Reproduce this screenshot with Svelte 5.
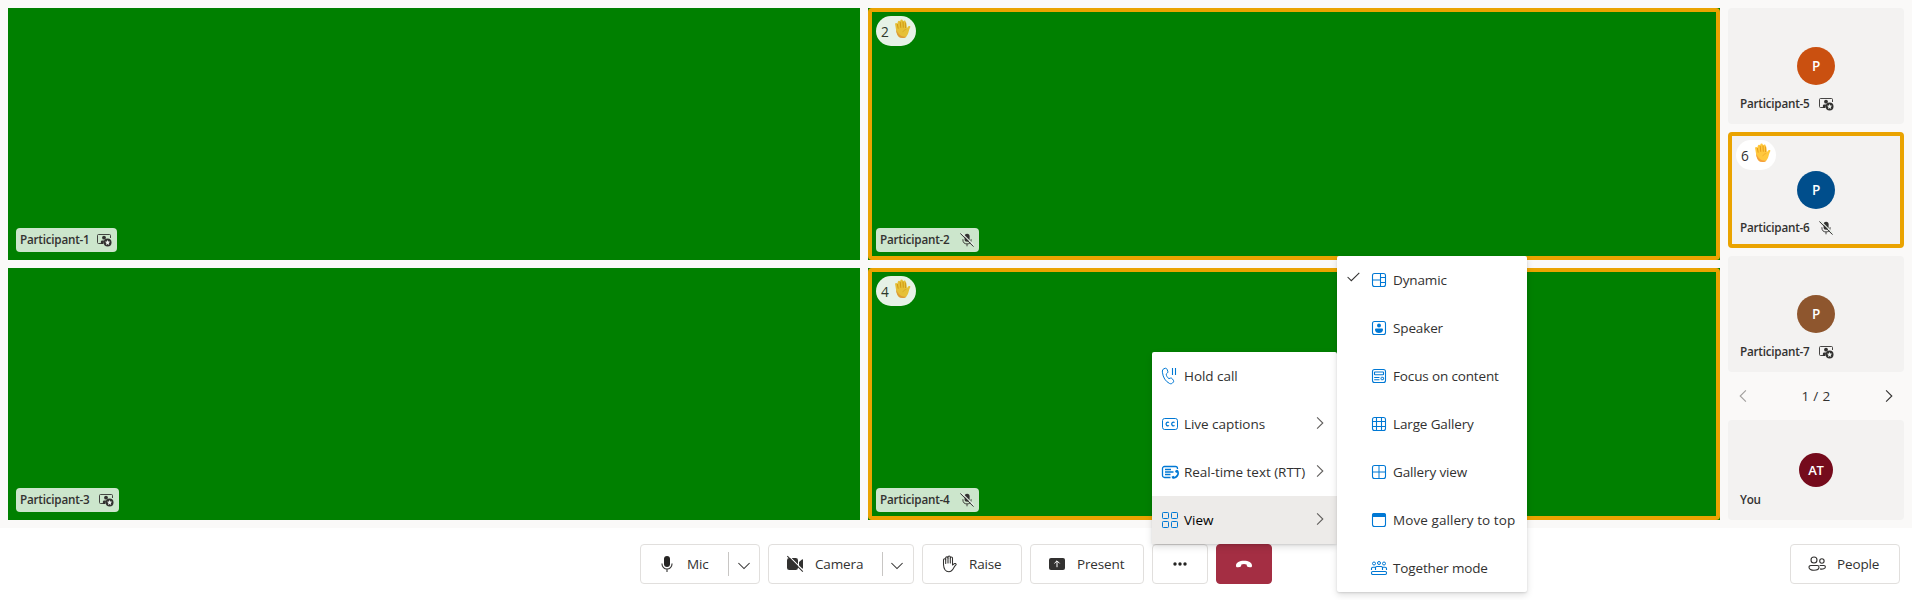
<script>
  const mainTiles = [
    { name: 'Participant-1', state: 'spotlight', w: 101 },
    { name: 'Participant-2', state: 'muted', hand: 2, w: 103 },
    { name: 'Participant-3', state: 'spotlight', w: 103 },
    { name: 'Participant-4', state: 'muted', hand: 4, w: 103 }
  ];
  const sideTiles = [
    { name: 'Participant-5', initials: 'P', state: 'spotlight', color: '#ca5010' },
    { name: 'Participant-6', initials: 'P', state: 'muted', hand: 6, color: '#004e8c' },
    { name: 'Participant-7', initials: 'P', state: 'spotlight', color: '#8e562e' }
  ];
  const moreMenu = [
    { icon: 'hold', label: 'Hold call' },
    { icon: 'cc', label: 'Live captions', sub: true },
    { icon: 'rtt', label: 'Real-time text (RTT)', sub: true },
    { icon: 'view', label: 'View', sub: true, active: true }
  ];
  const viewMenu = [
    { icon: 'dynamic', label: 'Dynamic', checked: true },
    { icon: 'speaker', label: 'Speaker' },
    { icon: 'focus', label: 'Focus on content' },
    { icon: 'large', label: 'Large Gallery' },
    { icon: 'gallery', label: 'Gallery view' },
    { icon: 'top', label: 'Move gallery to top', wide: true },
    { icon: 'together', label: 'Together mode' }
  ];
</script>

{#snippet stateIcon(state)}
  {#if state === 'muted'}
    <svg class="state" width="14" height="14" viewBox="0 0 14 14" fill="none" stroke="#323130">
      <rect x="4.6" y=".8" width="5" height="8" rx="2.5" fill="#323130" stroke="none" />
      <path d="M2.9 6.2v.6a4.1 4.1 0 0 0 8.2 0v-.6M7 11v2.3" stroke-width=".9" />
      <path d="M1.100 -.5l13.2 13.2" stroke="#e4ece4" stroke-width="1.1" />
      <path d="M0.3 .4l13.2 13.2" stroke-width="1" />
    </svg>
  {:else}
    <svg class="state" width="15" height="14" viewBox="0 0 15 14" fill="none" stroke="#323130">
      <path d="M4.500 10.500H1.500a1 1 0 0 1-1-1v-7a1 1 0 0 1 1-1h11a1 1 0 0 1 1 1V5" stroke-width=".9" />
      <circle cx="7" cy="4.700" r="1.900" fill="#323130" stroke="none" />
      <path d="M3.900 10.900V8.700a1.200 1.200 0 0 1 1.200-1.200h2L6.400 10.900z" fill="#323130" stroke="none" />
      <circle cx="10.600" cy="9.500" r="3.900" fill="#323130" stroke="none" />
      <path d="M10.600 6.900l.75 1.700 1.850.2-1.400 1.250.4 1.850-1.600-.95-1.600.95.4-1.850L8 8.800l1.850-.2z" fill="#eef2ee" stroke="none" />
    </svg>
  {/if}
{/snippet}

{#snippet handBadge(order, dim)}
  <div class="badge" class:dim>
    <span>{order}</span>
    <svg width="17" height="20" viewBox="0 0 17 20">
      <path d="M2 10.500L1.100 5.300a1.100 1.100 0 0 1 2.150-.5L3.800 3a1.200 1.200 0 0 1 2.350-.4l.2-1a1.200 1.200 0 0 1 2.400 0l.6.9a1.150 1.150 0 0 1 2.300.2l.7 2.300.6 4.200 1.100-1.700c.8-1.100 2.700-.6 2.300.5-.7 1.200-1 2.200-1.400 3.600C14 16 12.500 19 8.600 19 4.500 19 2.600 15.500 2 10.500z" fill="#ffc83d" />
      <path d="M3.300 5l.9 4.600M6.200 2.800l.6 6M9 2.500l.3 6.200M11.700 3.500l-.1 5.500" stroke="#d67d00" stroke-width=".6" fill="none" />
      <path d="M2 10.500C2.600 15.500 4.500 19 8.600 19c1.800 0 3.100-.6 4-1.600-4.400 1.100-7.900-1.100-10.600-6.900z" fill="#f59f3d" />
      <path d="M8.800 13.200c.6-1.700 1.700-2.600 3.500-2.700" stroke="#e79b1f" stroke-width=".5" fill="none" />
    </svg>
  </div>
{/snippet}

{#snippet chevron(dir)}
  {#if dir === 'down'}
    <svg width="12" height="8" viewBox="0 0 12 8" fill="none" stroke="currentColor" stroke-width="1.050"><path d="M.4 1l5.600 5.600L11.600 1" /></svg>
  {:else if dir === 'left'}
    <svg width="8" height="12" viewBox="0 0 8 12" fill="none" stroke="currentColor" stroke-width="1.100"><path d="M6.900.4L1.200 6l5.700 5.600" /></svg>
  {:else}
    <svg width="8" height="12" viewBox="0 0 8 12" fill="none" stroke="currentColor" stroke-width="1.100"><path d="M1.100.4L6.800 6l-5.700 5.600" /></svg>
  {/if}
{/snippet}

{#snippet menuIcon(name)}
  <svg class="mi" width="18" height="18" viewBox="0 0 18 18" fill="none" stroke="#0078d4" stroke-width="1">
    {#if name === 'hold'}
      <path d="M3 1.700l1.200-.4c.8-.2 1.500.2 1.800.9l.8 2c.3.7.1 1.300-.4 1.800L5.200 7.100c.1 1.700 1.100 3.400 2.700 4.500l1.500-.5c.7-.2 1.400 0 1.800.6l1.200 1.600c.4.600.4 1.400-.1 1.900l-.8.8c-.8.800-1.900 1-2.900.5C4.500 14.400 2 10.600 1.400 5.200 1.200 3.500 1.700 2.200 3 1.700z" />
      <path d="M11.500 1v7M14.500 1v7" stroke-width="1.100" />
    {:else if name === 'cc'}
      <rect x="1.500" y="3.500" width="15" height="11" rx="2.200" />
      <path d="M8 7.400a1.900 1.900 0 1 0 0 3.200M13.600 7.400a1.900 1.900 0 1 0 0 3.200" stroke-width="1.200" />
    {:else if name === 'rtt'}
      <path d="M9.500 14.500h-6a2 2 0 0 1-2-2v-7a2 2 0 0 1 2-2h11a2 2 0 0 1 2 2V6" stroke-width="1.300" />
      <path d="M4 6.500h6M4 9h8.500M4 11.500h5.500" stroke-width="1.300" />
      <path d="M16 7.400c2.200 2.600 1.100 7-4 7.600" stroke-width="1.700" />
      <path d="M14.500 8.900l2-1.200M11.500 13.200l1 1.900" stroke-width="2.300" />
    {:else if name === 'view'}
      <rect x="1.500" y="1.500" width="6" height="6" rx=".8" />
      <rect x="10.500" y="1.500" width="6" height="6" rx=".8" />
      <rect x="1.500" y="10.500" width="6" height="6" rx=".8" />
      <rect x="10.500" y="10.500" width="6" height="6" rx=".8" />
    {:else if name === 'together'}
      <rect x="1.500" y="12.500" width="15" height="3" rx="1.200" stroke-width="1.100" />
      <circle cx="4" cy="4.500" r="1.500" /><circle cx="9" cy="4" r="1.500" /><circle cx="14" cy="4.500" r="1.500" />
      <path d="M1.500 11V9.600a1.400 1.400 0 0 1 1.400-1.400h2.300M16.500 11V9.600a1.400 1.400 0 0 0-1.400-1.400h-2.300M5.500 11V8.700a1.300 1.300 0 0 1 1.300-1.200h4.400a1.300 1.300 0 0 1 1.300 1.200V11" stroke-width="1.100" />
    {:else}
      <rect x="2.500" y="2.500" width="13" height="13" rx="2" stroke-width="1.100" />
      {#if name === 'dynamic'}
        <path d="M10.500 2.500v13M2.500 9h8M10.500 6.500h5M10.500 11.500h5" stroke-width="1.100" />
      {:else if name === 'speaker'}
        <circle cx="9" cy="6.400" r="2" fill="#0078d4" stroke="none" />
        <path d="M5 10.700c0-.8.5-1.200 1.200-1.200h5.600c.7 0 1.200.4 1.200 1.200 0 2-1.800 3.300-4 3.300s-4-1.300-4-3.300z" fill="#0078d4" stroke="none" />
      {:else if name === 'focus'}
        <rect x="4.500" y="5" width="9" height="2.800" rx=".5" stroke-width="1.100" />
        <path d="M4.200 10.500h5.300M4.200 12.800h5.300" stroke-width="1.100" />
        <rect x="11" y="10.300" width="2.600" height="2.400" rx=".5" />
      {:else if name === 'large'}
        <path d="M6.500 2.500v13M11.500 2.500v13M2.500 6.500h13M2.500 11.500h13" stroke-width="1.100" />
      {:else if name === 'gallery'}
        <path d="M9 2.500v13M2.500 9h13" />
      {:else if name === 'top'}
        <path d="M2 6V4.200a2.200 2.200 0 0 1 2.200-2.200h9.600a2.200 2.200 0 0 1 2.200 2.200V6z" fill="#0078d4" stroke="none" />
      {/if}
    {/if}
  </svg>
{/snippet}

<div class="call">
  <section class="stage">
    <div class="grid">
      {#each mainTiles as t}
        <article class="tile" class:raised={t.hand}>
          {#if t.hand}{@render handBadge(t.hand, true)}{/if}
          <div class="tag" style="width:{t.w}px"><span>{t.name}</span>{@render stateIcon(t.state)}</div>
        </article>
      {/each}
    </div>
    <aside>
      {#each sideTiles as t}
        <article class="person" class:raised={t.hand}>
          <div class="avatar" style="background:{t.color}">{t.initials}</div>
          <div class="who"><span>{t.name}</span>{@render stateIcon(t.state)}</div>
          {#if t.hand}{@render handBadge(t.hand, false)}{/if}
        </article>
      {/each}
      <nav class="pager">
        <span class="off">{@render chevron('left')}</span>
        <span class="count">1 / 2</span>
        <span>{@render chevron('right')}</span>
      </nav>
      <article class="person self">
        <div class="avatar">AT</div>
        <div class="who"><span>You</span></div>
      </article>
    </aside>
  </section>

  <footer>
    <div class="controls">
      <div class="btn mic">
        <svg width="20" height="20" viewBox="0 0 20 20" fill="none" stroke="#323130">
          <rect x="7" y="2" width="6" height="11" rx="3" fill="#252423" stroke="none" />
          <path d="M5 9.500v.5a5 5 0 0 0 10 0v-.5M10 15v3" stroke-width="1.100" />
        </svg>
        <span class="label">Mic</span><i></i><span class="arrow">{@render chevron('down')}</span>
      </div>
      <div class="btn camera">
        <svg width="20" height="20" viewBox="0 0 20 20">
          <rect x="2" y="4" width="11" height="12" rx="2.300" fill="#323130" />
          <path d="M14 8l3-2.500c.5-.4 1-.2 1 .4v8.200c0 .6-.5.8-1 .4L14 12z" fill="#323130" />
          <path d="M3.200 1.300l15.500 15.500" stroke="#fff" stroke-width="1.200" />
          <path d="M2.300 2.200l15.500 15.500" stroke="#323130" stroke-width="1.100" />
        </svg>
        <span class="label">Camera</span><i></i><span class="arrow">{@render chevron('down')}</span>
      </div>
      <div class="btn raise">
        <svg width="20" height="20" viewBox="0 0 20 20" fill="none" stroke="#323130" stroke-width="1.050" stroke-linejoin="round" stroke-linecap="round">
          <path d="M4.500 10.500V5.800a1.100 1.100 0 0 1 2.200 0V4a1.150 1.150 0 0 1 2.300 0V3.200a1.150 1.150 0 0 1 2.300 0V4a1.100 1.100 0 0 1 2.200 0v7l1.500-1.200c.9-.6 2-.2 2.200.8-1.800 1.300-2.600 3.800-3.800 5.300-.9 1.200-1.900 1.800-3.400 1.800-3.300 0-5.300-2.700-5.500-7.200z" />
          <path d="M6.700 5.800v3.700M9 4v5M11.300 4v5" />
        </svg>
        <span class="label">Raise</span>
      </div>
      <div class="btn present">
        <svg width="20" height="20" viewBox="0 0 20 20">
          <rect x="2" y="4" width="16" height="12" rx="2" fill="#323130" />
          <path d="M10 13.200V7M7.400 9.400L10 6.800l2.600 2.600" stroke="#fff" fill="none" stroke-width="1" />
        </svg>
        <span class="label">Present</span>
      </div>
      <div class="btn more">
        <svg width="16" height="6" viewBox="0 0 16 6" fill="#252423"><circle cx="3" cy="3" r="1.700" /><circle cx="8" cy="3" r="1.700" /><circle cx="13" cy="3" r="1.700" /></svg>
      </div>
      <div class="btn end">
        <svg width="18" height="8" viewBox="0 0 18 8" fill="#fff"><path d="M9 .8c4.500 0 8 2 8 4.600 0 1.600-.7 2.100-2 1.900l-1.800-.3c-.9-.2-1.300-.6-1.400-1.400l-.2-1.100a8 8 0 0 0-5.200 0l-.2 1.100c-.1.800-.5 1.200-1.400 1.400L3 7.300c-1.300.2-2-.3-2-1.900C1 2.800 4.500.8 9 .8z" /></svg>
      </div>
    </div>
    <div class="btn people">
      <svg width="20" height="20" viewBox="0 0 20 20" fill="none" stroke="#323130" stroke-width="1.100">
        <circle cx="7" cy="6" r="3" /><circle cx="14.900" cy="7" r="2.200" />
        <path d="M3.700 11.500h6.600a1.700 1.700 0 0 1 1.700 1.700c0 1.900-2.200 3-5 3s-5-1.100-5-3a1.700 1.700 0 0 1 1.700-1.700zM12.600 11.500h4.300a1.500 1.500 0 0 1 1.500 1.500c0 1.600-2.700 2.500-5.300 1.900" />
      </svg>
      <span class="label">People</span>
    </div>
  </footer>

  <ul class="menu more-menu">
    {#each moreMenu as m}
      <li class:active={m.active}>
        {@render menuIcon(m.icon)}<span>{m.label}</span>
        {#if m.sub}<b>{@render chevron('right')}</b>{/if}
      </li>
    {/each}
  </ul>
  <ul class="menu view-menu">
    {#each viewMenu as m}
      <li class:wide={m.wide}>
        <em>
          {#if m.checked}<svg width="13" height="10" viewBox="0 0 13 10" fill="none" stroke="#323130" stroke-width="1.050"><path d="M.6 5l3.700 3.700L12.300.8" /></svg>{/if}
        </em>
        {@render menuIcon(m.icon)}<span>{m.label}</span>
      </li>
    {/each}
  </ul>
</div>

<style>
  :global(body) { margin: 0; background: #fff; }
  .call { position: relative; width: 1912px; height: 600px; overflow: hidden; background: #fff; color: #323130; font: 400 13.500px/20px "Open Sans", "Noto Sans", sans-serif; letter-spacing: -.14px; }
  .call :global(*) { box-sizing: border-box; }
  svg { display: block; flex: none; }
  .stage { display: flex; gap: 8px; height: 528px; padding: 8px; background: #faf9f8; }
  .grid { display: grid; grid-template: 252px 252px / 852px 852px; gap: 8px; }
  .tile { position: relative; display: flex; align-items: flex-end; padding: 8px; background: green; }
  .raised::after { content: ""; position: absolute; inset: 0; border: 4px solid #eaa300; border-radius: 4px; }
  .tag { display: flex; align-items: center; justify-content: space-between; height: 24px; padding: 0 5px 0 4px; border-radius: 4px; background: rgba(255,255,255,.8); }
  .tag, .who { font-size: 11.700px; font-weight: 600; line-height: 16px; letter-spacing: -.23px; white-space: nowrap; }
  .tag span, .who span { padding-bottom: 2px; }
  .badge { position: absolute; left: 8px; top: 8px; display: flex; align-items: center; width: 40px; height: 30px; padding: 0 5px; border-radius: 15px; background: #fff; font-size: 13.700px; }
  .badge span { width: 13px; padding-top: 1px; }
  .badge svg { margin-top: -4px; }
  .dim { opacity: .9; }
  aside { display: flex; flex-direction: column; width: 176px; }
  .person { position: relative; display: flex; flex-direction: column; align-items: center; height: 116px; padding: 39px 12px 0; margin-bottom: 8px; border-radius: 4px; background: #f3f2f1; }
  .person:nth-child(3) { margin-bottom: 0; }
  .avatar { display: grid; place-items: center; width: 38px; height: 38px; flex: none; border-radius: 50%; color: #fff; font-size: 13.500px; font-weight: 600; }
  .who { display: flex; align-items: center; align-self: stretch; gap: 9px; height: 20px; margin-top: 9px; }
  .self { height: 100px; padding-top: 33px; margin: 0; }
  .self .avatar { width: 34px; height: 34px; background: #750b1c; font-size: 13px; }
  .self .who { margin-top: 3px; }
  .pager { display: flex; align-items: center; justify-content: space-between; height: 48px; padding: 0 11px; }
  .pager .off { color: #a19f9d; }
  .count { letter-spacing: .3px; }
  footer { display: flex; justify-content: space-between; height: 72px; padding: 16px 12px 0 640px; }
  .controls { display: flex; gap: 8px; }
  .btn { display: flex; align-items: center; height: 40px; border: 1px solid #e1dfdd; border-radius: 4px; background: #fff; }
  .mic { width: 120px; padding-left: 16px; }
  .camera { width: 146px; padding-left: 16px; }
  .raise { width: 100px; padding-left: 16px; }
  .present { width: 114px; padding-left: 16px; }
  .people { width: 110px; padding-left: 16px; }
  .label { margin-left: 10px; white-space: nowrap; }
  .btn i { width: 1px; height: 24px; margin-left: auto; background: #c8c6c4; }
  .arrow { display: flex; justify-content: center; width: 30px; padding-top: 4px; }
  .camera .arrow { padding-right: 2px; }
  .more, .end { width: 56px; justify-content: center; }
  .end { border-color: #a42e43; background: #a42e43; }
  .menu { position: absolute; margin: 0; padding: 0; list-style: none; background: #fff; border-radius: 2px; box-shadow: 0 3px 7px rgba(0,0,0,.13), 0 1px 2px rgba(0,0,0,.11); }
  .more-menu { left: 1152px; top: 352px; width: 185px; letter-spacing: -.04px; }
  .view-menu { left: 1337px; top: 256px; width: 190px; }
  .menu li { display: flex; align-items: center; height: 48px; white-space: nowrap; }
  .more-menu li { padding: 0 13px 0 9px; gap: 5px; }
  .more-menu b { margin: -2px 0 0 auto; color: #605e5c; }
  .more-menu .active { background: #edebe9; color: #000; }
  .view-menu li { padding-left: 10px; }
  .view-menu .wide { letter-spacing: .08px; }
  .view-menu em { width: 23px; margin-top: -7px; }
  .view-menu span { margin-left: 5px; }
</style>
